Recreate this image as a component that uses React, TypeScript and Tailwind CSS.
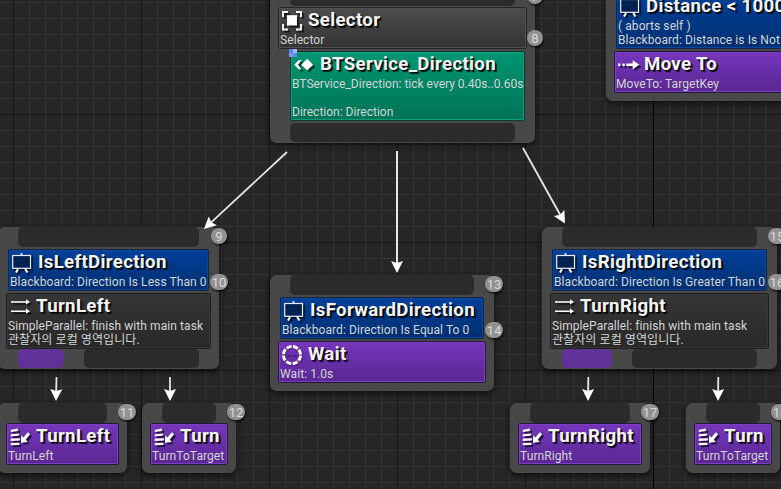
import type { ReactNode } from "react";

type IconName = "selector" | "service" | "board" | "move" | "parallel" | "wait" | "task";

function Glyph({ name }: { name: IconName }) {
  switch (name) {
    case "selector":
      return (
        <g>
          <path d="M1 7V2H6M14 2H19V7M19 14V19.500H14M6 19.500H1V14" fill="none" stroke="#fff" strokeWidth="1.800" />
          <rect x="5" y="5.200" width="10" height="10.300" fill="#fff" />
        </g>
      );
    case "service":
      return (
        <g fill="#fff">
          <path d="M13.200 5.800L18.200 10.700L13.200 15.600L8.200 10.700Z" stroke="#fff" strokeWidth="1.400" strokeLinejoin="round" />
          <path d="M4.800 6H7.600L4 10.800L7.600 15.600H4.800L0.300 10.800Z" />
        </g>
      );
    case "board":
      return (
        <g>
          <path d="M6 17L4 20.500M13.200 17L15.500 20.500" stroke="#fff" strokeWidth="2" />
          <path d="M9.500 1V3.500" stroke="#fff" strokeWidth="1.600" />
          <rect x="0.700" y="3.500" width="17.800" height="12.800" fill="#06214f" stroke="#e8edf5" strokeWidth="1.200" />
        </g>
      );
    case "move":
      return (
        <g fill="#fff">
          <rect x="0" y="9.500" width="2.400" height="2.600" />
          <rect x="4.400" y="9.500" width="2.400" height="2.600" />
          <rect x="8.300" y="9.500" width="8" height="2.600" />
          <path d="M14.700 6.300L21.300 10.800L14.700 15.300Z" />
        </g>
      );
    case "parallel":
      return (
        <g fill="#fff">
          <path d="M1 5.200H16V3.200L20 6L16 8.600V6.700H1Z" />
          <path d="M1 14.400H16V12.400L20 15.200L16 17.800V15.900H1Z" />
        </g>
      );
    case "wait":
      return (
        <g>
          <circle cx="10" cy="11" r="8.600" fill="none" stroke="#fff" strokeWidth="2.900" strokeDasharray="5.354 1.400" strokeDashoffset="-0.700" />
          <path d="M5 11.800H9M11 11.800H15" stroke="#2b1250" strokeOpacity="0.700" strokeWidth="1.200" />
        </g>
      );
    case "task":
      return (
        <g fill="#fff">
          <path d="M0.800 3.800L8 2.600V4.900L0.800 5.900ZM0.800 8.200L9 7.400V9.600L0.800 10.400ZM0.800 12.600L9.800 12.200V14.400L0.800 14.900ZM0.800 17L9.300 16.800V19L0.800 19.300Z" />
          <path d="M11 16.800L11.300 9.300L13.400 11.500L17.800 6.200L20 8.200L15.700 13.700L17.900 15.900Z" />
        </g>
      );
  }
}

function Icon({ name }: { name: IconName }) {
  const shadow =
    name === "wait"
      ? "[filter:drop-shadow(1px_1px_1px_rgba(0,0,0,0.35))]"
      : "[filter:drop-shadow(2px_2px_0.5px_rgba(0,0,0,0.6))]";
  return (
    <svg viewBox="0 0 20 20" className={`mt-[2px] size-5 shrink-0 overflow-visible ${shadow}`}>
      <Glyph name={name} />
    </svg>
  );
}

const tones = {
  blue: "from-[#02409a] to-[#002f70] border-[#172640] shadow-[inset_0_0_0_1px_#08479d]",
  purple: "from-[#7636bd] to-[#582891] border-[#28193a] shadow-[inset_0_0_0_1px_#7c3fc2]",
  green: "from-[#009671] to-[#007357] border-[#123b30] shadow-[inset_0_0_0_1px_#05a17a]",
  gray: "from-[#4c4c4c] to-[#333333] border-[#252525] shadow-[inset_0_0_0_1px_#505050]",
  dark: "from-[#363636] to-[#282828] border-[#202020] shadow-[inset_0_0_0_1px_#373737]",
};

function Badge({ n, className }: { n: number; className: string }) {
  return (
    <span
      className={`absolute z-10 flex h-4 items-center justify-center rounded-full bg-[#929292] text-[13px] leading-none text-[#d9d9d9] shadow-[1px_2px_2px_rgba(0,0,0,0.6)] ${n < 10 ? "w-4" : "w-[18px]"} ${className}`}
    >
      {n}
    </span>
  );
}

interface BlockProps {
  tone: keyof typeof tones;
  icon: IconName;
  title: string;
  lines: string[];
  className?: string;
  lineTracking?: string;
}

function Block({ tone, icon, title, lines, className = "", lineTracking = "tracking-[0.08px]" }: BlockProps) {
  return (
    <div className={`flex shrink-0 flex-col rounded-[2px] border bg-linear-to-b whitespace-nowrap ${tones[tone]} ${className}`}>
      <div className="flex h-[25px] items-start gap-[6px] pl-[3px]">
        <Icon name={icon} />
        <span className="text-[18.67px] leading-[25px] font-bold tracking-[0.32px] text-[#f4f4f4] [text-shadow:1px_1px_0_rgba(0,0,0,0.8),2px_2px_1px_rgba(0,0,0,0.8)]">
          {title}
        </span>
      </div>
      {lines.map((line, i) => (
        <span key={i} className={`h-[14px] pl-px text-[12px] leading-[14px] text-[#d5d5d5] ${lineTracking}`}>
          {line}
        </span>
      ))}
    </div>
  );
}

function Pin({ className = "bg-[#2b2b2b]" }: { className?: string }) {
  return <div className={`shrink-0 rounded-[5px] ${className}`} />;
}

function Node({ className, children }: { className: string; children: ReactNode }) {
  return (
    <section className={`absolute flex flex-col rounded-[7px] bg-[#4a4a4a]/95 shadow-[0_2px_6px_1px_rgba(0,0,0,0.55)] ${className}`}>
      {children}
    </section>
  );
}

function Parallel({ className, badges, decorator, desc, title, pin }: {
  className: string;
  badges: [number, number];
  decorator: string;
  desc: string;
  title: string;
  pin: string;
}) {
  return (
    <Node className={`top-[227px] h-[142px] ${className}`}>
      <Badge n={badges[0]} className={`top-[1px] ${badges[0] < 10 ? "-right-2" : "-right-[9px]"}`} />
      <Badge n={badges[1]} className="top-[47px] -right-[9px]" />
      <Pin className="mx-5 mb-[2px] h-5 bg-[#2b2b2b]" />
      <Block tone="blue" icon="board" title={decorator} lines={[desc]} className="mx-[10px] mb-[2px] h-[42px]" />
      <Block
        tone="dark"
        icon="parallel"
        title={title}
        lines={["SimpleParallel: finish with main task", "관찰자의 로컬 영역입니다."]}
        className="mx-2 h-14"
      />
      <div className="mx-5 flex h-[19px] gap-5">
        <Pin className={`bg-[#603298] ${pin}`} />
        <Pin className="flex-1 bg-[#2b2b2b]" />
      </div>
    </Node>
  );
}

function Task({ className, n, title, desc }: { className: string; n: number; title: string; desc: string }) {
  return (
    <Node className={`top-[403px] h-[70px] ${className}`}>
      <Badge n={n} className="top-[1px] -right-[9px]" />
      <Pin className="mx-5 h-5 bg-[#2b2b2b]" />
      <Block tone="purple" icon="task" title={title} lines={[desc]} className="mx-2 h-[42px]" />
    </Node>
  );
}

const lightLines = "bg-[linear-gradient(to_right,#343434_1px,transparent_1px),linear-gradient(to_bottom,#343434_1px,transparent_1px)] bg-[size:16px_16px] bg-[position:13px_2px]";
const darkLines = "bg-[linear-gradient(to_right,#161616_1px,transparent_1px),linear-gradient(to_bottom,#161616_1px,transparent_1px)] bg-[size:128px_128px] bg-[position:13px_114px]";

const wires = [
  { from: [287, 152], to: [204, 229], w: 1.8 },
  { from: [397, 151], to: [397, 273], w: 2 },
  { from: [523, 148], to: [565, 223.5], w: 1.8 },
  { from: [56.5, 377], to: [56, 401], w: 1.8 },
  { from: [170, 377], to: [170, 401], w: 1.8 },
  { from: [588.3, 377], to: [588, 401], w: 1.8 },
  { from: [718.3, 377], to: [718, 401], w: 1.8 },
];

export default function App() {
  return (
    <main className="relative h-[489px] w-[781px] overflow-hidden bg-[#262626] font-[Roboto,'Noto_Sans_CJK_KR',sans-serif]">
      <div className={`absolute inset-0 ${lightLines}`} />
      <div className={`absolute inset-0 ${darkLines}`} />
      <div className="absolute inset-y-0 left-[653px] w-px bg-black" />

      <Node className="-top-[14px] left-[270px] h-[157px] w-[265px]">
        <Badge n={7} className="top-[2px] -right-2" />
        <Badge n={8} className="top-[44px] -right-2" />
        <Pin className="mx-5 mb-px h-5 bg-[#2b2b2b]" />
        <Block tone="gray" icon="selector" title="Selector" lines={["Selector"]} className="mx-2 mb-[2px] h-[42px]" />
        <div className="relative mr-[10px] mb-[2px] ml-5 flex flex-col">
          <Block
            tone="green"
            icon="service"
            title="BTService_Direction"
            lines={["BTService_Direction: tick every 0.40s..0.60s", "", "Direction: Direction"]}
            className="h-[70px]"
            lineTracking="tracking-normal"
          />
          <span className="absolute -top-[2px] -left-px grid size-2 grid-cols-2">
            <i className="bg-[#5b82ea]" />
            <i className="bg-[#9db8ff]" />
            <i className="bg-[#7598f5]" />
            <i className="bg-[#6088ee]" />
          </span>
        </div>
        <Pin className="mx-5 h-[19px] bg-[#2b2b2b]" />
      </Node>

      <Node className="-top-[37px] left-[606px] h-[138px] w-[240px]">
        <Block
          tone="blue"
          icon="board"
          title="Distance < 1000"
          lines={["( aborts self )", "Blackboard: Distance is Is Not Set"]}
          className="mx-[10px] mt-[30px] mb-[2px] h-14"
        />
        <Block tone="purple" icon="move" title="Move To" lines={["MoveTo: TargetKey"]} className="mx-2 h-[42px]" />
      </Node>

      <Parallel
        className="-left-[2px] w-[221px]"
        badges={[9, 10]}
        decorator="IsLeftDirection"
        desc="Blackboard: Direction Is Less Than 0"
        title="TurnLeft"
        pin="w-[46px]"
      />
      <Parallel
        className="left-[542px] w-[235px]"
        badges={[15, 16]}
        decorator="IsRightDirection"
        desc="Blackboard: Direction Is Greater Than 0"
        title="TurnRight"
        pin="w-[50px]"
      />

      <Node className="top-[275px] left-[270px] h-[116px] w-[224px]">
        <Badge n={13} className="top-[1px] -right-[9px]" />
        <Badge n={14} className="top-[47px] -right-[9px]" />
        <Pin className="mx-5 mb-[2px] h-5 bg-[#2b2b2b]" />
        <Block tone="blue" icon="board" title="IsForwardDirection" lines={["Blackboard: Direction Is Equal To 0"]} className="mx-[10px] mb-[2px] h-[42px]" />
        <Block tone="purple" icon="wait" title="Wait" lines={["Wait: 1.0s"]} className="mx-2 h-[42px]" />
      </Node>

      <Task className="-left-[2px] w-[129px]" n={11} title="TurnLeft" desc="TurnLeft" />
      <Task className="left-[142px] w-[94px]" n={12} title="Turn" desc="TurnToTarget" />
      <Task className="left-[510px] w-[140px]" n={17} title="TurnRight" desc="TurnRight" />
      <Task className="left-[686px] w-[94px]" n={18} title="Turn" desc="TurnToTarget" />

      <svg viewBox="0 0 781 489" className="pointer-events-none absolute inset-0 h-[489px] w-[781px]">
        {wires.map(({ from: [x1, y1], to: [x2, y2], w }, i) => {
          const angle = (Math.atan2(y2 - y1, x2 - x1) * 180) / Math.PI;
          const length = Math.hypot(x2 - x1, y2 - y1);
          return (
            <g key={i} transform={`translate(${x2} ${y2}) rotate(${angle})`}>
              <path d={`M${-length} 0H-8`} stroke="#e6e6e6" strokeWidth={w} />
              <path d="M0 0L-12 -6L-10 0L-12 6Z" fill="#fff" />
            </g>
          );
        })}
      </svg>
    </main>
  );
}
